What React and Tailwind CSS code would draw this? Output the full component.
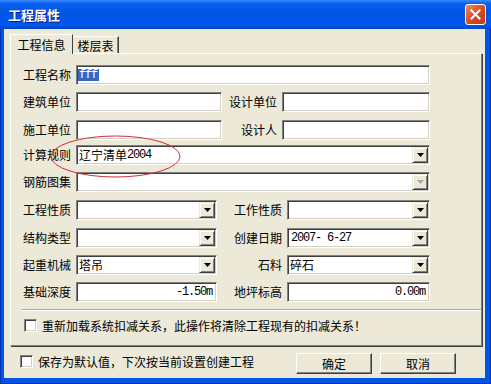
const cjk = "font-['Noto_Sans_CJK_SC',sans-serif]";
const mono = "font-['Liberation_Mono','Noto_Sans_CJK_SC',monospace] text-[12px] tracking-[-1.2px]";
const sunken =
  "border border-t-[#808080] border-l-[#808080] border-b-white border-r-white shadow-[inset_1px_1px_0_#404040,inset_-1px_-1px_0_#d4d0c8]";
const raised =
  "border border-t-white border-l-white border-b-[#404040] border-r-[#404040] shadow-[inset_-1px_-1px_0_#808080]";

function Arrow({ disabled }) {
  return (
    <div className="w-[16px] h-[16px] shrink-0 flex items-center justify-center bg-[#ece9d8] border border-t-[#ece9d8] border-l-[#ece9d8] border-b-[#404040] border-r-[#404040] shadow-[inset_1px_1px_0_#fff,inset_-1px_-1px_0_#808080]">
      <svg width="7" height="4" viewBox="0 0 7 4">
        <path d="M0 0h7L3.5 4z" fill={disabled ? '#aca899' : '#000'} />
      </svg>
    </div>
  )
}

function Label({ w, children }) {
  return (
    <div className={`${w} shrink-0 text-right pr-[1px] text-[12px] leading-none text-black mr-[4px]`}>
      {children}
    </div>
  )
}

function TextBox({ w, children, right }) {
  return (
    <div
      className={`${w} h-[20px] ${sunken} bg-white flex items-center ${right ? 'justify-end pr-[4px]' : 'pl-[1px]'}`}
    >
      {children}
    </div>
  )
}

function Combo({ w, children, disabled }) {
  return (
    <div className={`${w} h-[20px] ${sunken} bg-white p-[1px] flex items-center`}>
      <div className="flex-1 pl-[1px] flex items-center text-[12px] leading-none">{children}</div>
      <Arrow disabled={disabled} />
    </div>
  )
}

function Check() {
  return <div className={`w-[13px] h-[13px] shrink-0 bg-white ${sunken}`} />
}

export default function App() {
  return (
    <div
      className={`relative w-[491px] h-[384px] overflow-hidden flex flex-col bg-[#0055e5] shadow-[inset_1px_0_0_#0031b0,inset_-1px_0_0_#0031b0,inset_0_-1px_0_#0031b0] ${cjk}`}
    >
      {/* title bar */}
      <div className="h-[29px] shrink-0 flex items-center pl-[8px] pr-[5px] bg-[linear-gradient(#3a8cff_0%,#0a5ff0_12%,#0055e5_45%,#0058ec_85%,#0046c8_100%)]">
        <span className="text-[13px] font-bold text-white leading-none [text-shadow:1px_1px_0_#0a1883]">
          工程属性
        </span>
        <div className="ml-auto w-[21px] h-[21px] rounded-[3px] border border-white bg-[linear-gradient(135deg,#f08a60,#d9481c_55%,#c23a12)] flex items-center justify-center">
          <svg width="11" height="11" viewBox="0 0 11 11">
            <path d="M1.5 1.5l8 8M9.5 1.5l-8 8" stroke="#fff" strokeWidth="2" strokeLinecap="square" />
          </svg>
        </div>
      </div>

      {/* client area */}
      <div className="flex-1 ml-[4px] mr-[6px] mb-[6px] bg-[#ece9d8] flex flex-col">
        {/* tabs */}
        <div className="h-[24px] shrink-0 flex items-end pl-[6px]">
          <div className="relative z-10 -mb-px h-[20px] w-[63px] bg-[#ece9d8] border-l border-t border-l-white border-t-white border-r border-r-[#404040] flex items-start justify-center pt-[4px] text-[12px] leading-none text-black">
            工程信息
          </div>
          <div className="h-[17px] w-[46px] border-t border-t-white border-r border-r-[#404040] shadow-[inset_-1px_0_0_#808080] flex items-start justify-center pt-[3px] text-[12px] leading-none text-black">
            楼层表
          </div>
        </div>

        {/* panel */}
        <div className="ml-[6px] w-[472px] h-[293px] border border-t-white border-l-white border-b-[#808080] border-r-[#808080] shadow-[1px_1px_0_#404040] flex flex-col">
          <div className="mt-[11px] flex items-center h-[20px]">
            <Label w="w-[61px]">工程名称</Label>
            <TextBox w="w-[354px]">
              <span className={`${mono} bg-[#316ac5] text-white leading-[12px] pl-[1px] pr-[2px]`}>fff</span>
            </TextBox>
          </div>
          <div className="mt-[7px] flex items-center h-[20px]">
            <Label w="w-[61px]">建筑单位</Label>
            <TextBox w="w-[146px]" />
            <Label w="w-[56px]">设计单位</Label>
            <TextBox w="w-[148px]" />
          </div>
          <div className="mt-[8px] flex items-center h-[20px]">
            <Label w="w-[61px]">施工单位</Label>
            <TextBox w="w-[146px]" />
            <Label w="w-[56px]">设计人</Label>
            <TextBox w="w-[148px]" />
          </div>
          <div className="mt-[5px] flex items-center h-[20px]">
            <Label w="w-[61px]">计算规则</Label>
            <Combo w="w-[354px]">
              <span>辽宁清单</span>
              <span className={mono}>2004</span>
            </Combo>
          </div>
          <div className="mt-[7px] flex items-center h-[20px]">
            <Label w="w-[61px]">钢筋图集</Label>
            <Combo w="w-[354px]" disabled />
          </div>
          <div className="mt-[8px] flex items-center h-[20px]">
            <Label w="w-[61px]">工程性质</Label>
            <Combo w="w-[141px]" />
            <Label w="w-[66px]">工作性质</Label>
            <Combo w="w-[143px]" />
          </div>
          <div className="mt-[8px] flex items-center h-[20px]">
            <Label w="w-[61px]">结构类型</Label>
            <Combo w="w-[141px]" />
            <Label w="w-[66px]">创建日期</Label>
            <Combo w="w-[143px]">
              <span className={`${mono} whitespace-pre pl-[1px]`}>2007- 6-27</span>
            </Combo>
          </div>
          <div className="mt-[7px] flex items-center h-[20px]">
            <Label w="w-[61px]">起重机械</Label>
            <Combo w="w-[141px]">塔吊</Combo>
            <Label w="w-[66px]">石料</Label>
            <Combo w="w-[143px]">碎石</Combo>
          </div>
          <div className="mt-[7px] flex items-center h-[20px]">
            <Label w="w-[61px]">基础深度</Label>
            <TextBox w="w-[141px]" right>
              <span className={mono}>-1.50m</span>
            </TextBox>
            <Label w="w-[66px]">地坪标高</Label>
            <TextBox w="w-[143px]" right>
              <span className={mono}>0.00m</span>
            </TextBox>
          </div>

          <div className="mt-[7px] ml-[11px] h-[2px] border-t border-t-[#aca899] border-b border-b-white" />

          <div className="mt-[8px] ml-[13px] flex items-center gap-[5px]">
            <Check />
            <span className="text-[12px] leading-none text-black">
              重新加载系统扣减关系，此操作将清除工程现有的扣减关系！
            </span>
          </div>
        </div>

        {/* bottom bar */}
        <div className="flex items-start">
          <div className="ml-[16px] mt-[9px] flex items-center gap-[5px]">
            <Check />
            <span className="text-[12px] leading-none text-black">保存为默认值，下次按当前设置创建工程</span>
          </div>
          <div className="ml-auto mr-[29px] mt-[7px] flex gap-[8px]">
            <div className={`w-[76px] h-[21px] bg-[#ece9d8] ${raised} flex items-center justify-center text-[12px] leading-none text-black`}>
              确定
            </div>
            <div className={`w-[76px] h-[21px] bg-[#ece9d8] ${raised} flex items-center justify-center text-[12px] leading-none text-black`}>
              取消
            </div>
          </div>
        </div>
      </div>

      {/* red annotation ring */}
      <svg className="absolute left-[50px] top-[135px]" width="131" height="43" viewBox="0 0 131 43">
        <ellipse cx="65.5" cy="21.5" rx="64.5" ry="20.5" fill="none" stroke="#c8323c" strokeWidth="1" />
      </svg>
    </div>
  )
}
